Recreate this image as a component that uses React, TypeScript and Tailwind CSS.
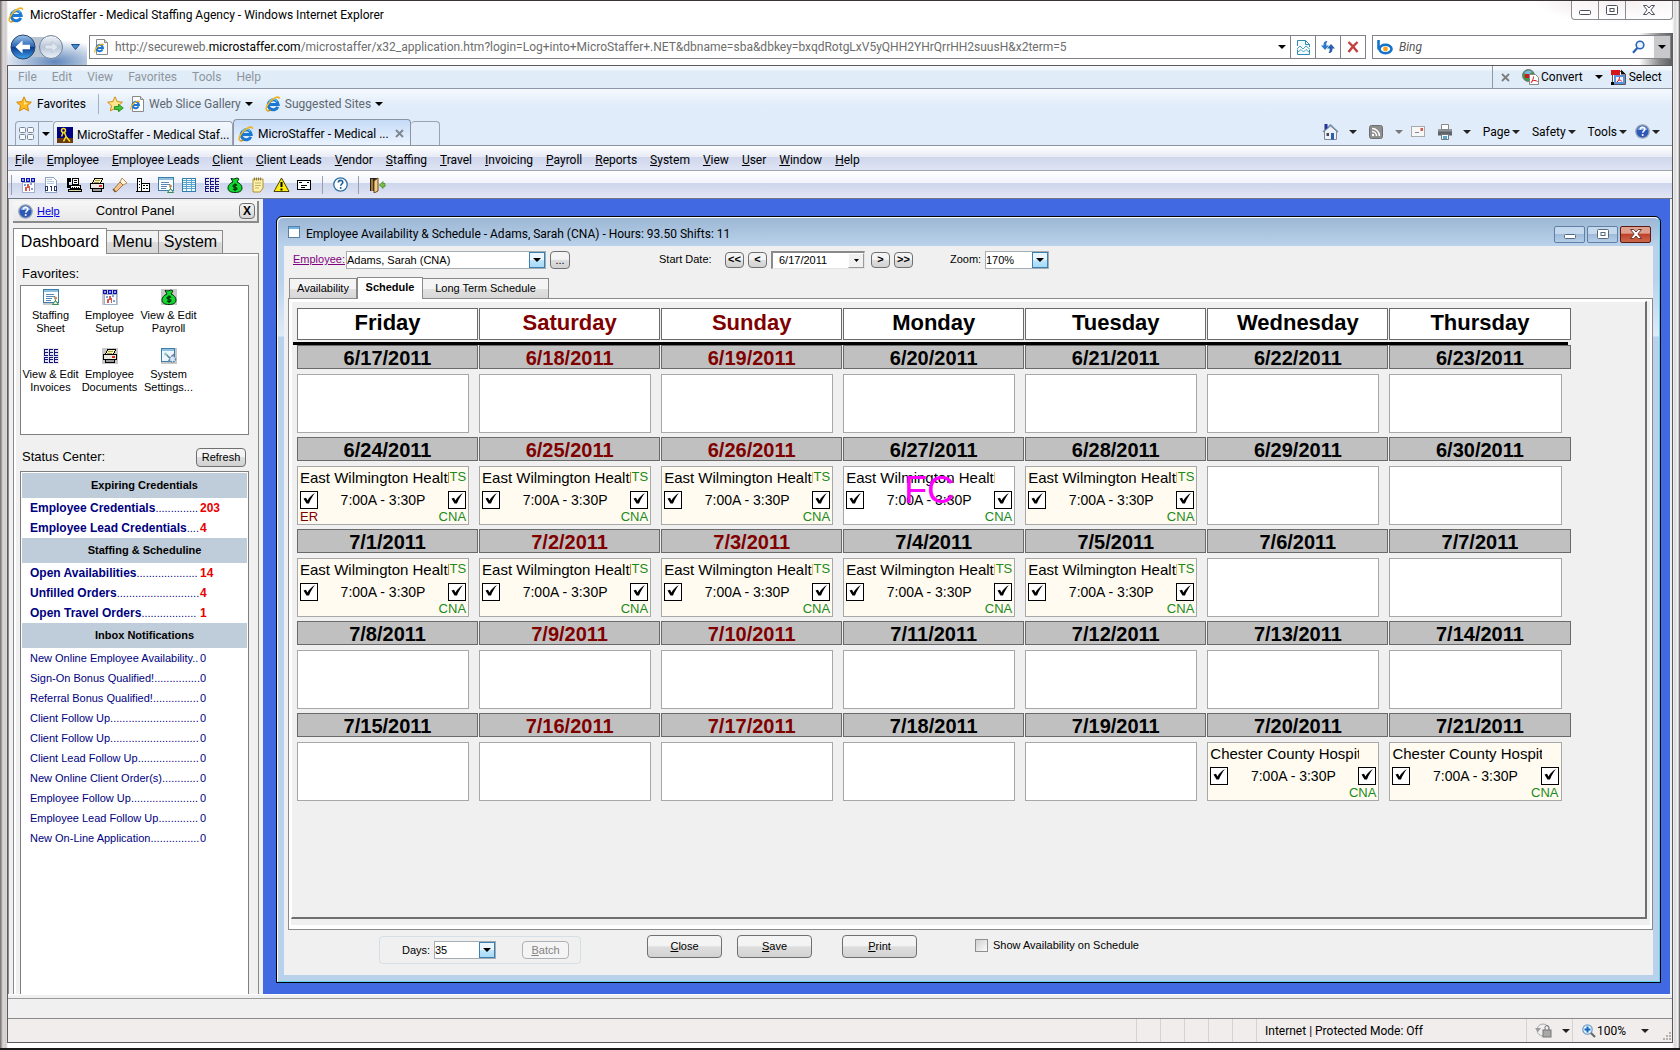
import React from "react";

const crisp = { shapeRendering: "crispEdges" as const };

/* ---------- small drawings ---------- */

function Caret({ className = "text-black" }: { className?: string }) {
  return (
    <svg width="8" height="4" viewBox="0 0 8 4" className={`shrink-0 ${className}`} aria-hidden="true">
      <path d="M0 0h8L4 4z" fill="currentColor" />
    </svg>
  );
}

function IeLogo({ size = 16 }: { size?: number }) {
  return (
    <svg width={size} height={size} viewBox="0 0 16 16" className="shrink-0" aria-hidden="true">
      <path d="M12.8 10.800A5 5 0 1 1 13.200 8.500H4.600" fill="none" stroke="#1b78d2" strokeWidth="3" />
      <path d="M12.400 5.400A5 5 0 0 0 4 5.400" fill="none" stroke="#5cc0f5" strokeWidth="1.300" />
      <path d="M2.200 14.600C-.8 12.800 4 5 9.400 2.200c3-1.600 5-1.400 5.200.6" fill="none" stroke="#f0b323" strokeWidth="1.600" />
      <path d="M2.200 14.600c1 .6 2.600 0 3.600-.6" fill="none" stroke="#c98a10" strokeWidth="1.300" />
    </svg>
  );
}

function PageIe() {
  return (
    <svg width="15" height="16" viewBox="0 0 15 16" className="shrink-0" aria-hidden="true">
      <path d="M2.500.5h8l3 3v12h-11z" fill="#fff" stroke="#8a8a8a" />
      <path d="M10.500.5v3h3" fill="#ddd" stroke="#8a8a8a" />
      <path d="M8.600 10.400A3.200 3.200 0 1 1 8.900 8.900H3.500" fill="none" stroke="#1b74cf" strokeWidth="2" />
      <path d="M1 13.500c-1-1.700 2-6.500 5.500-8 2-.8 3-.3 3 .7" fill="none" stroke="#f0b323" strokeWidth="1.200" />
    </svg>
  );
}

function BackForward() {
  return (
    <svg width="56" height="28" viewBox="0 0 56 28" aria-hidden="true">
      <defs>
        <linearGradient id="back" x1="0" y1="0" x2="0" y2="1">
          <stop offset="0" stopColor="#9cc4ec" />
          <stop offset=".48" stopColor="#2c65b4" />
          <stop offset=".5" stopColor="#0b3788" />
          <stop offset="1" stopColor="#3fa4f0" />
        </linearGradient>
        <linearGradient id="fwd" x1="0" y1="0" x2="0" y2="1">
          <stop offset="0" stopColor="#f3f6fa" />
          <stop offset=".5" stopColor="#b9c7da" />
          <stop offset="1" stopColor="#edf2f8" />
        </linearGradient>
      </defs>
      <rect x="8" y="4" width="36" height="20" fill="#b8c4d2" />
      <circle cx="14" cy="14" r="12" fill="url(#back)" stroke="#2b4468" />
      <path d="M6.500 14l7-6.500v4.200H21v4.600h-7.500v4.200z" fill="#fff" />
      <circle cx="42" cy="14" r="11.500" fill="url(#fwd)" stroke="#74839a" />
      <path d="M49 14l-6-5.500v3.500h-7v4h7v3.500z" fill="#dfe6ee" stroke="#b0bccb" strokeWidth=".6" />
    </svg>
  );
}

function Star({ plus = false }: { plus?: boolean }) {
  return (
    <svg width="17" height="16" viewBox="0 0 17 16" className="shrink-0" aria-hidden="true">
      <path d="M8 .8l2.200 4.800 5.200.6-3.900 3.500 1.100 5.200L8 12.300l-4.600 2.600 1.100-5.200L.6 6.200l5.200-.6z" fill={plus ? "#ffe48a" : "#ffb81f"} stroke="#d48a12" />
      <path d="M8 3l1.200 3.500 2.800.4L8 9z" fill="#ffe999" />
      {plus && <path d="M7.500 10.500h4V8.300l4.800 3.700-4.800 3.700v-2.200h-4z" fill="#3fc43a" stroke="#1d7f1a" strokeWidth=".8" />}
    </svg>
  );
}

function QuickTabs() {
  return (
    <svg width="16" height="14" viewBox="0 0 16 14" aria-hidden="true">
      {[[0.5, 0.5], [8.5, 0.5], [0.5, 7.5], [8.5, 7.5]].map(([x, y]) => (
        <rect key={`${x}-${y}`} x={x} y={y} width="6" height="5" rx="1" fill="#f6f9fd" stroke="#7d8794" />
      ))}
    </svg>
  );
}

function StafferFavicon() {
  return (
    <svg width="16" height="16" viewBox="0 0 16 16" className="shrink-0" aria-hidden="true">
      <path d="M0 0h16v16H0z" fill="#000080" />
      <path d="M0 11h16v5H0z" fill="#6b3a10" />
      <circle cx="6.500" cy="3.500" r="2" fill="none" stroke="#f5e020" strokeWidth="1.500" />
      <path d="M6 6L4.500 9.500M7.500 5.500l1.500 4-2.500 5M9 9.500l4 5" stroke="#f5e020" strokeWidth="1.500" fill="none" />
    </svg>
  );
}

function CompatIcon() {
  return (
    <svg width="13" height="15" viewBox="0 0 13 15" aria-hidden="true">
      <path d="M.5 6V.5h8l4 4V7M.5 9.500v5h12V10" fill="#f4fbff" stroke="#2f8cb5" />
      <path d="M8.500.5v4h4" fill="none" stroke="#2f8cb5" />
      <path d="M0 9l3-3 3 3 3-3 4 3.500M1 12l3-2.500 2.500 2.500L9 9.500l3 2.500" fill="none" stroke="#4aa9c9" />
    </svg>
  );
}

function RefreshIcon() {
  return (
    <svg width="14" height="14" viewBox="0 0 14 14" aria-hidden="true">
      <path d="M6.500 1C3 1 2.500 3 2.500 5.500H0L4 10l4-4.500H5.300C5.300 3.500 5.500 2.500 6.500 1z" fill="#2e7bc8" />
      <path d="M7.500 13c3.500 0 4-2 4-4.500H14L10 4 6 8.500h2.700c0 2-.2 3-1.200 4.500z" fill="#2a5fae" />
    </svg>
  );
}

function StopIcon() {
  return (
    <svg width="12" height="12" viewBox="0 0 12 12" aria-hidden="true">
      <path d="M1.500 1L6 5.500 10.500 1M1.500 11L6 5.500l4.500 5.500" fill="none" stroke="#c3403c" strokeWidth="2.400" />
    </svg>
  );
}

function BingLogo() {
  return (
    <svg width="16" height="15" viewBox="0 0 16 15" className="shrink-0" aria-hidden="true">
      <path d="M1.500 0v9.500" stroke="#1473c8" strokeWidth="2.600" />
      <ellipse cx="8.500" cy="9" rx="6" ry="4.200" fill="#fff" stroke="#1473c8" strokeWidth="2.600" />
      <circle cx="8.500" cy="9" r="2.400" fill="#f6a21b" />
    </svg>
  );
}

function Magnifier() {
  return (
    <svg width="13" height="14" viewBox="0 0 13 14" aria-hidden="true">
      <circle cx="8" cy="5" r="3.800" fill="#e8f3ff" stroke="#2a62b3" strokeWidth="1.600" />
      <path d="M5.300 8L1 12.800" stroke="#2a62b3" strokeWidth="2.200" />
    </svg>
  );
}

function ConvertIcon() {
  return (
    <svg width="17" height="16" viewBox="0 0 17 16" aria-hidden="true">
      <circle cx="6.500" cy="6.500" r="6" fill="#3a9a4a" stroke="#777" />
      <path d="M2 4c3-3 6-3 8-1L6 6z" fill="#7fb6e6" />
      <path d="M3 5h8v4H3z" fill="#d8151b" />
      <path d="M7.500 5.500h6l3 3v7h-9z" fill="#fff" stroke="#888" />
      <path d="M9 14c2-3 2.500-5 2.500-6.500M10 12c2-1 4-.5 5.500.5" stroke="#d8151b" fill="none" />
    </svg>
  );
}

function SelectIcon() {
  return (
    <svg width="16" height="16" viewBox="0 0 16 16" aria-hidden="true">
      <path d="M1.500 2.500h10l3 3v10h-13z" fill="#fff" stroke="#555" />
      <path d="M10 .5l5 5h-5z" fill="#111" />
      <path d="M0 1h9v5H0z" fill="#d8151b" />
      <path d="M4 7h9v7H4z" fill="#eef5ff" stroke="#5c8fdc" strokeWidth="2" />
      <path d="M6 13c2-2 2.500-3 2.500-5M7 11.500c2-1 3 0 4 1" stroke="#d8151b" fill="none" />
      <path d="M0 13h3v3H0z" />
    </svg>
  );
}

function HomeIcon() {
  return (
    <svg width="17" height="16" viewBox="0 0 17 16" aria-hidden="true">
      <path d="M2.500 7v8.500h12V7L8.500 2z" fill="#eef2f8" stroke="#7d8899" />
      <path d="M1 8l7.500-7L16 8" fill="none" stroke="#7b90ac" strokeWidth="1.600" />
      <path d="M2.500 0h3v4l-3 2z" fill="#27339a" />
      <path d="M9 9h3v6.500H9z" fill="#2a5fae" />
      <path d="M4.500 9h2.500v3H4.500z" fill="#445" />
    </svg>
  );
}

function FeedIcon() {
  return (
    <svg width="14" height="14" viewBox="0 0 14 14" aria-hidden="true">
      <rect x=".5" y=".5" width="13" height="13" rx="2" fill="#8e8e8e" stroke="#6f6f6f" />
      <path d="M3 3.500A7.500 7.500 0 0 1 10.500 11M3 6.500A4.500 4.500 0 0 1 7.500 11" fill="none" stroke="#fff" strokeWidth="1.500" />
      <circle cx="4" cy="10" r="1.200" fill="#fff" />
    </svg>
  );
}

function MailIcon() {
  return (
    <svg width="14" height="11" viewBox="0 0 14 11" aria-hidden="true">
      <rect x=".5" y=".5" width="13" height="10" fill="#f7f7f7" stroke="#a9a9a9" />
      <path d="M4 6.500h4" stroke="#888" />
      <path d="M9.500 2h2.500v3H9.500z" fill="#d65a4a" />
    </svg>
  );
}

function PrintIcon() {
  return (
    <svg width="16" height="16" viewBox="0 0 16 16" aria-hidden="true">
      <path d="M4.500.5h7v5h-7z" fill="#fff" stroke="#888" />
      <path d="M1 5.500h14v6H1z" fill="#5f6468" />
      <path d="M1 5.500h14v2H1z" fill="#8f9498" />
      <path d="M4.500 10.500h7v5h-7z" fill="#f2f8ff" stroke="#777" />
      <path d="M6 12h4v3H6z" fill="#56a7c9" />
    </svg>
  );
}

function HelpBall({ dark = true }: { dark?: boolean }) {
  return (
    <svg width="15" height="15" viewBox="0 0 15 15" className="shrink-0" aria-hidden="true">
      <circle cx="7.500" cy="7.500" r="6.700" fill={dark ? "#2d58b8" : "#fdfeff"} stroke={dark ? "#9aa6b8" : "#2f6f9f"} strokeWidth="1.300" />
      {dark && <path d="M2.500 6a5.200 5.200 0 0 1 10 0z" fill="#7fa3e4" />}
      <path d="M5.400 5.600c0-3 4.400-2.800 4.400-.3 0 1.700-2.100 1.700-2.100 3.500" fill="none" stroke={dark ? "#fff" : "#1d5c96"} strokeWidth="1.600" />
      <circle cx="7.700" cy="11" r="1" fill={dark ? "#fff" : "#1d5c96"} />
    </svg>
  );
}

const box16 = "shrink-0";

function CalendarIcon() {
  return (
    <svg width="16" height="16" viewBox="0 0 16 16" className={box16} style={crisp} aria-hidden="true">
      <path d="M2 5h12v10H2z" fill="#fff" stroke="#9fb0cc" />
      <path d="M1 1h4v4H1zM6 1h4v4H6zM11 1h4v4h-4z" fill="#1212b0" />
      <path d="M2 2h2v2H2zM7 2h2v2H7zM12 2h2v2h-2z" fill="#8fa2f0" />
      <path d="M4 7h2v2H4zM10 6h2v2h-2zM11 11h2v2h-2z" fill="#7b9fe0" />
      <path d="M7 7h2v4H7zM5 10h2v4H5zM9 9h1v5H9z" fill="#d6584a" />
    </svg>
  );
}

function BinaryIcon() {
  return (
    <svg width="16" height="16" viewBox="0 0 16 16" className={box16} style={crisp} aria-hidden="true">
      <path d="M2.500.5h8l3 3v12h-11z" fill="#fff" stroke="#8ea3bf" />
      <path d="M4 2.500h5M4 4.500h7M4 6.500h7" stroke="#b8c8dc" />
      <rect x="2.500" y="9.500" width="2" height="4" fill="#fff" stroke="#2b3a66" />
      <path d="M8.500 9v5M7 9.500h1" stroke="#2b3a66" />
      <rect x="11.500" y="9.500" width="2" height="4" fill="#fff" stroke="#2b3a66" />
    </svg>
  );
}

function PhoneIcon() {
  return (
    <svg width="17" height="16" viewBox="0 0 17 16" className={box16} style={crisp} aria-hidden="true">
      <path d="M1 1h4v4H3v3h2v3H1z" />
      <rect x="6.500" y="1.500" width="6" height="6" fill="#fff" stroke="#000" />
      <path d="M8 3.500h3M8 5.500h3" stroke="#000" />
      <path d="M4.500 8.500h10v3h-10z" fill="#fff" stroke="#000" />
      <path d="M6 10.500h7" stroke="#000" strokeDasharray="1 1" />
      <path d="M2.500 12.500h13v2h-13z" fill="#d8d4a8" stroke="#000" />
    </svg>
  );
}

function PrinterIcon() {
  return (
    <svg width="16" height="16" viewBox="0 0 16 16" className={box16} style={crisp} aria-hidden="true">
      <path d="M5.500 1.500h8l-2 5h-8z" fill="#fdf6b0" stroke="#000" />
      <path d="M6 3.500h5M5 5.500h5" stroke="#a09850" />
      <path d="M1.500 6.500h13v5h-13z" fill="#ece9e4" stroke="#000" />
      <path d="M10 8h3v2h-3z" fill="#e0281e" />
      <path d="M3.500 11.500h9v3h-9z" fill="#9a9a9a" stroke="#000" />
    </svg>
  );
}

function FlashlightIcon() {
  return (
    <svg width="16" height="16" viewBox="0 0 16 16" className={box16} aria-hidden="true">
      <path d="M10 1l5 5-4 2-3-3z" fill="#fff7e0" stroke="#b58a53" />
      <path d="M8 5l3 3-7 7-2.500-2.500z" fill="#f1c690" stroke="#a8743a" />
      <path d="M1 12l2.500 3" stroke="#7d5426" strokeWidth="1.500" />
    </svg>
  );
}

function BuildingIcon() {
  return (
    <svg width="16" height="16" viewBox="0 0 16 16" className={box16} style={crisp} aria-hidden="true">
      <rect x="2.500" y="1.500" width="4" height="13" fill="#fff" stroke="#000" />
      <rect x="6.500" y="6.500" width="8" height="8" fill="#fff" stroke="#000" />
      <path d="M4 4.500h1M4 7.500h1M4 10.500h1M8 8.500h2M11 8.500h2M8 11.500h2M11 11.500h2" stroke="#000" />
      <path d="M1 14.500h14" stroke="#000" />
    </svg>
  );
}

function SheetIcon() {
  return (
    <svg width="16" height="16" viewBox="0 0 16 16" className={box16} aria-hidden="true">
      <path d="M.5.5h15v13H.5z" fill="#fff" stroke="#3e7ea6" style={crisp} />
      <path d="M1 1h14v2H1z" fill="#8cc0e0" style={crisp} />
      <path d="M3 5.500h8M3 7.500h9M3 9.500h6M3 11.500h5" stroke="#5a86b8" style={crisp} />
      <circle cx="12.500" cy="9" r="1.500" fill="#c08a50" />
      <path d="M12.500 10.500v2M9.500 15.500l3-4 3 4z" fill="#dff3e0" stroke="#3b8a5a" />
    </svg>
  );
}

function GridIcon({ dark = false }: { dark?: boolean }) {
  return dark ? (
    <svg width="16" height="16" viewBox="0 0 16 16" className={box16} style={crisp} aria-hidden="true">
      <path d="M0 0h16v16H0z" fill="#e6e6f2" />
      {[0, 5, 10].map((x) => (
        <path key={x} d={`M${x + 1} 1h4v1h-3v2h3v1h-3v2h3v1h-4zM${x + 1} 9h4v1h-3v1h3v1h-3v2h3v1h-4z`} fill="#14147a" />
      ))}
    </svg>
  ) : (
    <svg width="16" height="16" viewBox="0 0 16 16" className={box16} style={crisp} aria-hidden="true">
      <rect x="1.500" y="1.500" width="13" height="13" fill="#f4fbff" stroke="#2f7fae" />
      <path d="M2 3.500h12M2 5.500h12M2 7.500h12M2 9.500h12M2 11.500h12M5.500 2v12M10.500 2v12" stroke="#5ba3ca" />
    </svg>
  );
}

function MoneyBag() {
  return (
    <svg width="16" height="16" viewBox="0 0 16 16" className={box16} aria-hidden="true">
      <path d="M4 1.500l3 .5 3-1 2 1-2 3c3 1 5 3.500 5 6 0 3-2.500 4.500-7 4.500S1 14 1 11c0-2.500 2-5 5-6z" fill="#12d92e" stroke="#06300c" />
      <path d="M10 8.500c-1-1.200-4-1-4 .5 0 1.800 4 .8 4 2.500 0 1.500-3 1.500-4 .3M8 6.500v7.500" fill="none" stroke="#03240a" strokeWidth="1.200" />
    </svg>
  );
}

function NotepadIcon() {
  return (
    <svg width="16" height="16" viewBox="0 0 16 16" className={box16} aria-hidden="true">
      <path d="M3 2h10v9l-3 4H3z" fill="#fdf2b0" stroke="#b0902c" />
      <path d="M4.500.5v3M6.500.5v3M8.500.5v3M10.500.5v3" stroke="#8d7c3f" />
      <path d="M5 6h6M5 8.500h6M5 11h4" stroke="#c5ae60" />
    </svg>
  );
}

function WarningIcon() {
  return (
    <svg width="17" height="16" viewBox="0 0 17 16" className={box16} aria-hidden="true">
      <path d="M8.500 1L16 14.500H1z" fill="#ffee10" stroke="#4a4200" strokeLinejoin="round" />
      <path d="M8.500 5v5M8.500 11.500v2" stroke="#000" strokeWidth="2" />
    </svg>
  );
}

function CardIcon() {
  return (
    <svg width="16" height="16" viewBox="0 0 16 16" className={box16} style={crisp} aria-hidden="true">
      <rect x="1.500" y="3.500" width="13" height="9" fill="#fff" stroke="#000" />
      <path d="M3 5.500h3M11 5.500h2M5 8.500h6M5 10.500h4" stroke="#000" />
    </svg>
  );
}

function DoorIcon() {
  return (
    <svg width="17" height="16" viewBox="0 0 17 16" className={box16} aria-hidden="true">
      <path d="M1 1h8v13H1z" fill="#222" />
      <path d="M5 4l4-3v13l-4 2z" fill="#f1ce8c" stroke="#6d4b18" />
      <path d="M2 2h2v12H2z" fill="#a87a3a" />
      <path d="M16 6.500h-2V4.500L10.500 8l3.500 3.500V9.500h2z" fill="#7ac043" stroke="#3a7d12" strokeWidth=".7" />
    </svg>
  );
}

function SettingsIcon() {
  return (
    <svg width="16" height="16" viewBox="0 0 16 16" className={box16} aria-hidden="true">
      <path d="M.5.5h13v13H.5z" fill="#eef7fd" stroke="#3e7ea6" style={crisp} />
      <path d="M1 1h12v2H1z" fill="#8cc3e2" style={crisp} />
      <path d="M5 6l7 8M13 6l-6 8" stroke="#5f86a6" strokeWidth="1.500" />
      <circle cx="11.500" cy="11" r="3" fill="#d7e8f4" stroke="#5f86a6" strokeDasharray="1.500 1" strokeWidth="1.500" />
      <circle cx="4.500" cy="6" r="1.500" fill="#9cc" />
    </svg>
  );
}

function WindowGlyph({ kind, stroke = "#4b4f5c", fill = "#fff" }: { kind: "min" | "max" | "close"; stroke?: string; fill?: string }) {
  return (
    <svg width="14" height="12" viewBox="0 0 14 12" aria-hidden="true">
      {kind === "min" && <rect x="1.500" y="6.500" width="11" height="4" rx="1" fill={fill} stroke={stroke} />}
      {kind === "max" && (
        <>
          <rect x="1.500" y="1.500" width="11" height="9" rx="1" fill={fill} stroke={stroke} />
          <rect x="5" y="4.500" width="4" height="3" fill="none" stroke={stroke} />
        </>
      )}
      {kind === "close" && (
        <path d="M1.500 1.500h3.300L7 4l2.200-2.500h3.300L8.900 6l3.600 4.500H9.200L7 8l-2.200 2.500H1.500L5.100 6z" fill={fill} stroke={stroke} strokeLinejoin="round" />
      )}
    </svg>
  );
}

/* ---------- browser chrome ---------- */

function TitleRow() {
  return (
    <div className="flex h-8 items-start justify-between bg-[radial-gradient(ellipse_90px_22px_at_97%_0,#e9d9dd,transparent)] pl-px">
      <div className="flex items-center gap-1.5 pt-1.5">
        <IeLogo />
        <h1 className="text-xs leading-4 text-black">MicroStaffer - Medical Staffing Agency - Windows Internet Explorer</h1>
      </div>
      <div className="flex h-[19px] divide-x divide-[#8a8a90] rounded-b border border-t-0 border-[#8a8a90] bg-white/60">
        <button aria-label="Minimize" className="flex w-[27px] items-center justify-center"><WindowGlyph kind="min" /></button>
        <button aria-label="Restore" className="flex w-[27px] items-center justify-center"><WindowGlyph kind="max" /></button>
        <button aria-label="Close window" className="flex w-[46px] items-center justify-center"><WindowGlyph kind="close" /></button>
      </div>
    </div>
  );
}

function AddressRow() {
  return (
    <div className="flex h-8 items-start bg-[linear-gradient(90deg,transparent_calc(100%-34px),#8a8a8c_calc(100%-14px),#5c5c5e_100%)]">
      <div className="flex h-full w-20 items-start gap-1.5 bg-[radial-gradient(ellipse_60px_22px_at_60%_90%,#5f86bb,transparent)] pl-0.5">
        <button aria-label="Back and forward"><BackForward /></button>
        <button aria-label="Recent pages" className="mt-[11px]">
          <svg width="9" height="6" viewBox="0 0 9 6" aria-hidden="true"><path d="M.5.5h8L4.500 5.500z" fill="#3f8fd0" stroke="#1f4f8a" /></svg>
        </button>
      </div>
      <div className="mt-0.5 ml-0.5 flex h-6 flex-1 border border-[#7f8288] bg-white/80">
        <div className="flex min-w-0 flex-1 items-center gap-1.5 px-1">
          <PageIe />
          <div className="min-w-0 flex-1 truncate text-xs text-[#6d6d6d]">
            http://secureweb.<span className="text-black">microstaffer.com</span>/microstaffer/x32_application.htm?login=Log+into+MicroStaffer+.NET&amp;dbname=sba&amp;dbkey=bxqdRotgLxV5yQHH2YHrQrrHH2suusH&amp;x2term=5
          </div>
          <Caret />
        </div>
        <button aria-label="Compatibility view" className="flex w-[25px] items-center justify-center border-l border-[#7f8288]"><CompatIcon /></button>
        <button aria-label="Refresh page" className="flex w-[25px] items-center justify-center border-l border-[#7f8288]"><RefreshIcon /></button>
        <button aria-label="Stop" className="flex w-[25px] items-center justify-center border-l border-[#7f8288]"><StopIcon /></button>
      </div>
      <div className="mt-0.5 ml-1.5 mr-0.5 flex h-6 w-[299px] items-center gap-1.5 border border-[#7f8288] bg-white/95 pl-1">
        <BingLogo />
        <input aria-label="Search Bing" placeholder="Bing" className="min-w-0 flex-1 bg-transparent text-xs italic outline-none placeholder:text-[#555]" />
        <button aria-label="Search" className="w-4"><Magnifier /></button>
        <button aria-label="Search options" className="flex h-full w-4 items-center justify-center bg-[#c9c9cb]"><Caret /></button>
      </div>
    </div>
  );
}

function BrowserMenu() {
  return (
    <div className="flex h-[23px] items-stretch border-b border-[#8c98a8] bg-[linear-gradient(#f6f9fd_0,#f1f6fc_4px,#e0ecf8_5px,#e0ecf8_100%)]">
      <nav className="flex flex-1 items-center gap-[15px] pl-2.5 text-xs text-[#8f959c]">
        {["File", "Edit", "View", "Favorites", "Tools", "Help"].map((m) => (
          <button key={m}>{m}</button>
        ))}
      </nav>
      <div className="flex w-[180px] items-center border-l border-[#8c98a8] pl-2 text-xs">
        <button aria-label="Close toolbar" className="mr-3 text-[#7d7d7d]">
          <svg width="9" height="9" viewBox="0 0 9 9" aria-hidden="true"><path d="M1 1l7 7M8 1L1 8" stroke="currentColor" strokeWidth="1.800" /></svg>
        </button>
        <button className="flex items-center gap-0.5"><ConvertIcon />Convert</button>
        <span className="ml-3 mr-2 flex"><Caret /></span>
        <button className="flex items-center gap-0.5"><SelectIcon />Select</button>
      </div>
    </div>
  );
}

function FavoritesBar() {
  return (
    <div className="flex h-[31px] items-center pl-2 pb-0.5 text-xs">
      <button className="flex items-center gap-1"><Star />Favorites</button>
      <span className="ml-3 mr-2 h-5 w-px bg-[#a5b1c0]" />
      <button aria-label="Add to favorites bar" className="mr-1.5"><Star plus /></button>
      <button className="flex items-center gap-1 text-[#5f6770]"><PageIe />Web Slice Gallery<Caret /></button>
      <button className="ml-3 flex items-center gap-1 text-[#5f6770]"><IeLogo />Suggested Sites<Caret /></button>
    </div>
  );
}

function BrowserTabs() {
  return (
    <div className="flex h-[26px] items-end border-b border-[#8a94a2] pl-[7px] text-xs">
      <button aria-label="Quick tabs" className="flex h-6 w-6 items-center justify-center rounded-tl border border-b-0 border-[#9aa4b1]"><QuickTabs /></button>
      <button aria-label="Tab list" className="flex h-6 w-[14px] items-center justify-center border-t border-[#9aa4b1]"><Caret /></button>
      <div role="tablist" className="flex items-end">
        <button role="tab" aria-selected="false" className="flex h-6 w-[180px] items-center gap-1 rounded-t border border-b-0 border-[#9aa4b1] bg-[linear-gradient(#f4f8fd,#dfe9f5)] pl-[3px] pt-0.5 whitespace-nowrap">
          <StafferFavicon />MicroStaffer - Medical Staf...
        </button>
        <div role="tab" aria-selected="true" className="flex h-[26px] w-[178px] items-center gap-1 rounded-t border border-b-0 border-[#8a94a2] bg-[linear-gradient(#c6dbf7,#eaf3fe)] pl-1 pr-1.5 pt-0.5 whitespace-nowrap">
          <IeLogo />
          <span className="flex-1">MicroStaffer - Medical ...</span>
          <button aria-label="Close tab" className="text-[#7d8590]">
            <svg width="9" height="9" viewBox="0 0 9 9" aria-hidden="true"><path d="M1 1l7 7M8 1L1 8" stroke="currentColor" strokeWidth="1.800" /></svg>
          </button>
        </div>
        <button aria-label="New tab" className="h-6 w-[29px] rounded-t border border-b-0 border-l-0 border-[#9aa4b1]" />
      </div>
      <div className="flex h-full flex-1 items-center justify-end pr-3 pb-0.5">
        <button aria-label="Home"><HomeIcon /></button>
        <span className="ml-2.5"><Caret className="text-[#222]" /></span>
        <button aria-label="Feeds" className="ml-3"><FeedIcon /></button>
        <span className="ml-3"><Caret className="text-[#777]" /></span>
        <button aria-label="Read mail" className="ml-2"><MailIcon /></button>
        <button aria-label="Print page" className="ml-3"><PrintIcon /></button>
        <span className="ml-2.5"><Caret className="text-[#222]" /></span>
        {["Page", "Safety", "Tools"].map((t) => (
          <button key={t} className="ml-3 flex items-center gap-0.5">{t}<Caret className="text-[#222]" /></button>
        ))}
        <button aria-label="Browser help" className="ml-2 flex items-center gap-0.5"><HelpBall /><Caret className="text-[#222]" /></button>
      </div>
    </div>
  );
}

/* ---------- application bars ---------- */

const appMenu = ["File", "Employee", "Employee Leads", "Client", "Client Leads", "Vendor", "Staffing", "Travel", "Invoicing", "Payroll", "Reports", "System", "View", "User", "Window", "Help"];

function AppMenu() {
  return (
    <nav className="flex h-[25px] items-center gap-[13px] border-b border-[#a0a4ae] bg-[linear-gradient(#fff_0,#e9ecf6_44%,#d0d7ec_46%,#dfe4f4_100%)] pl-[7px] pt-1 text-xs">
      {appMenu.map((m) => (
        <button key={m}><u>{m[0]}</u>{m.slice(1)}</button>
      ))}
    </nav>
  );
}

const tools: [string, React.ReactNode][] = [
  ["Employee setup", <CalendarIcon />],
  ["Data", <BinaryIcon />],
  ["Call log", <PhoneIcon />],
  ["Print", <PrinterIcon />],
  ["Find", <FlashlightIcon />],
  ["Facilities", <BuildingIcon />],
  ["Staffing sheet", <SheetIcon />],
  ["Schedule grid", <GridIcon />],
  ["Invoices", <GridIcon dark />],
  ["Payroll", <MoneyBag />],
  ["Notes", <NotepadIcon />],
  ["Alerts", <WarningIcon />],
  ["Mail", <CardIcon />],
];

function AppToolbar() {
  return (
    <div className="flex h-7 items-center border-b border-[#6f7585] bg-[linear-gradient(#fff_0,#f1f3fb_44%,#cdd6ed_46%,#e2e6f5_100%)] pl-[3px]">
      <span className="mr-2 h-5 w-px bg-[#9a9ea8]" />
      <div className="flex items-center gap-[7px]">
        {tools.map(([name, icon]) => (
          <button key={name} aria-label={name} className="w-4">{icon}</button>
        ))}
      </div>
      <span className="mx-2.5 h-[18px] w-px bg-[#9a9ea8]" />
      <button aria-label="Help topics"><HelpBall dark={false} /></button>
      <span className="mx-2.5 h-[18px] w-px bg-[#9a9ea8]" />
      <button aria-label="Exit"><DoorIcon /></button>
    </div>
  );
}

/* ---------- side panel ---------- */

const favorites: [string, string, React.ReactNode][] = [
  ["Staffing", "Sheet", <SheetIcon />],
  ["Employee", "Setup", <CalendarIcon />],
  ["View & Edit", "Payroll", <MoneyBag />],
  ["View & Edit", "Invoices", <GridIcon dark />],
  ["Employee", "Documents", <PrinterIcon />],
  ["System", "Settings...", <SettingsIcon />],
];

/* Each row: label, length of its dotted leader, count. */
const status: { title: string; strong: boolean; rows: [string, number, number][] }[] = [
  { title: "Expiring Credentials", strong: true, rows: [["Employee Credentials", 14, 203], ["Employee Lead Credentials", 4, 4]] },
  { title: "Staffing & Scheduline", strong: true, rows: [["Open Availabilities", 20, 14], ["Unfilled Orders", 27, 4], ["Open Travel Orders", 18, 1]] },
  {
    title: "Inbox Notifications",
    strong: false,
    rows: [
      ["New Online Employee Availability", 2, 0],
      ["Sign-On Bonus Qualified!", 15, 0],
      ["Referral Bonus Qualified!", 15, 0],
      ["Client Follow Up", 29, 0],
      ["Client Follow Up", 29, 0],
      ["Client Lead Follow Up", 20, 0],
      ["New Online Client Order(s)", 12, 0],
      ["Employee Follow Up", 22, 0],
      ["Employee Lead Follow Up", 13, 0],
      ["New On-Line Application", 16, 0],
    ],
  },
];

function SidePanel() {
  return (
    <aside className="flex w-[255px] flex-col border-l border-[#8b8b8b] bg-[#f0f0f0] pl-1 pr-1 font-['Liberation_Sans',sans-serif] text-black">
      <div className="mt-0.5 flex h-[22px] items-center border-b-2 border-r-2 border-[#8a8a8a] bg-[linear-gradient(#f7f7f7,#e8e8e8)] pl-[5px] pr-0.5">
        <HelpBall />
        <a href="#help" className="ml-1 text-[11px] text-[#0000e0] underline">Help</a>
        <h2 className="ml-9 flex-1 text-[13px] leading-4">Control Panel</h2>
        <button aria-label="Close panel" className="flex h-4 w-4 items-center justify-center rounded-sm border border-[#707070] bg-[linear-gradient(#f4f4f4,#d4d4d4)] text-xs font-bold">X</button>
      </div>
      <div role="tablist" className="mt-[5px] flex items-end text-base leading-5">
        <button role="tab" aria-selected="true" className="z-10 -mb-px h-[26px] w-[94px] border border-b-0 border-[#8a8a8a] bg-white">Dashboard</button>
        <button role="tab" aria-selected="false" className="h-[23px] w-[52px] border border-b-0 border-l-0 border-[#8a8a8a] bg-[linear-gradient(#f2f2f2_50%,#dcdcdc_52%,#d6d6d6)]">Menu</button>
        <button role="tab" aria-selected="false" className="h-[23px] w-16 border border-b-0 border-l-0 border-[#8a8a8a] bg-[linear-gradient(#f2f2f2_50%,#dcdcdc_52%,#d6d6d6)]">System</button>
      </div>
      <div className="flex flex-1 flex-col border border-b-0 border-[#8a8a8a] bg-white pt-0.5 pl-0.5">
        <div className="flex flex-1 flex-col bg-[#f0f0f0] pl-1 pr-[9px] pt-2">
          <h3 className="pl-0.5 text-[13px] leading-5">Favorites:</h3>
          <div className="mt-px grid h-[150px] grid-cols-[59px_59px_59px] content-start border border-[#7f7f7f] bg-white">
            {favorites.map(([a, b, icon]) => (
              <button key={a + b} className="flex h-[59px] flex-col items-center pt-[3px] text-[11px] leading-[13px] whitespace-nowrap">
                <span className="mb-1 bg-[#c8c8c8]">{icon}</span>
                <span>{a}</span>
                <span>{b}</span>
              </button>
            ))}
          </div>
          <div className="mt-3 flex h-5 items-center justify-between pl-0.5 pr-[3px]">
            <h3 className="text-[13px] leading-5">Status Center:</h3>
            <button className="h-[19px] w-[50px] rounded-sm border border-[#707070] bg-[linear-gradient(#f4f4f4_45%,#dedede_50%,#d0d0d0)] text-[11px] leading-4">Refresh</button>
          </div>
          <div className="mt-1 flex-1 border border-b-0 border-[#7f7f7f] bg-white px-px pt-px">
            {status.map((s) => (
              <section key={s.title}>
                <h4 className="bg-[#bfccd9] pl-5 text-center text-[11px] leading-[25px] font-bold">{s.title}</h4>
                {s.rows.map(([label, dots, n], i) => (
                  <a key={i} href="#status" className={s.strong ? "flex h-5 items-center pl-2 text-xs font-bold text-[#000080]" : "flex h-5 items-center pl-2 text-[11px] text-[#000080]"}>
                    <span className="w-[170px] whitespace-nowrap">
                      {label}<span className="text-[11px] font-normal">{".".repeat(dots)}</span>
                    </span>
                    <span className={s.strong ? "text-[#e80000]" : ""}>{n}</span>
                  </a>
                ))}
              </section>
            ))}
          </div>
        </div>
      </div>
    </aside>
  );
}

/* ---------- schedule window ---------- */

const arrowBtn = "flex w-4 items-center justify-center border border-[#3c7fb1] bg-[linear-gradient(#eaf6fd_50%,#bee6fd_52%,#a7d9f5)]";

function Combo({ id, value, className }: { id: string; value: string; className: string }) {
  return (
    <div className={`flex h-[18px] border border-[#a5acb2] bg-white ${className}`}>
      <select id={id} defaultValue={value} className="min-w-0 flex-1 appearance-none bg-white text-[11px] leading-4 outline-none">
        <option>{value}</option>
      </select>
      <span aria-hidden="true" className={arrowBtn}><Caret /></span>
    </div>
  );
}

const pushBtn = "rounded-sm border border-[#707070] bg-[linear-gradient(#f4f4f4_45%,#dedede_52%,#d2d2d2)]";

function Controls() {
  return (
    <div className="flex h-[31px] items-center pl-[9px] pb-1 text-[11px]">
      <label htmlFor="employee" className="w-[53px] text-[#800080] underline">Employee:</label>
      <Combo id="employee" value="Adams, Sarah (CNA)" className="w-[200px]" />
      <button aria-label="Browse employees" className={`ml-1 h-[18px] w-5 leading-3 ${pushBtn}`}>...</button>
      <label htmlFor="start" className="ml-[89px] w-[66px]">Start Date:</label>
      <div className="flex items-center gap-1">
        <button aria-label="Back one period" className={`h-4 w-[19px] ${pushBtn} flex items-center justify-center font-bold`}>&lt;&lt;</button>
        <button aria-label="Back one day" className={`h-4 w-[19px] ${pushBtn} flex items-center justify-center font-bold`}>&lt;</button>
        <div className="flex h-[18px] w-[94px] border border-t-2 border-l-2 border-[#8a8a8a] border-r-[#e4e4e4] border-b-[#e4e4e4] bg-white">
          <input id="start" defaultValue="6/17/2011" className="min-w-0 flex-1 bg-transparent pl-1.5 text-[11px] outline-none" />
          <span aria-hidden="true" className="flex w-4 items-center justify-center border border-[#9a9a9a] border-t-white border-l-white bg-[#f0f0f0]">
            <svg width="5" height="3" viewBox="0 0 5 3"><path d="M0 0h5L2.500 3z" /></svg>
          </span>
        </div>
        <button aria-label="Forward one day" className={`ml-0.5 h-4 w-[19px] ${pushBtn} flex items-center justify-center font-bold`}>&gt;</button>
        <button aria-label="Forward one period" className={`h-4 w-[19px] ${pushBtn} flex items-center justify-center font-bold`}>&gt;&gt;</button>
      </div>
      <label htmlFor="zoom" className="ml-[37px] w-[35px]">Zoom:</label>
      <Combo id="zoom" value="170%" className="w-16" />
    </div>
  );
}

const days = ["Friday", "Saturday", "Sunday", "Monday", "Tuesday", "Wednesday", "Thursday"];

type Shift = { client: string; er?: boolean; ts?: boolean; fc?: boolean };
const ew: Shift = { client: "East Wilmington Health", ts: true };
const cc: Shift = { client: "Chester County Hospit" };

const weeks: { dates: string[]; shifts: (Shift | null)[] }[] = [
  { dates: ["6/17/2011", "6/18/2011", "6/19/2011", "6/20/2011", "6/21/2011", "6/22/2011", "6/23/2011"], shifts: [null, null, null, null, null, null, null] },
  {
    dates: ["6/24/2011", "6/25/2011", "6/26/2011", "6/27/2011", "6/28/2011", "6/29/2011", "6/30/2011"],
    shifts: [{ ...ew, er: true }, ew, ew, { client: ew.client, fc: true }, ew, null, null],
  },
  { dates: ["7/1/2011", "7/2/2011", "7/3/2011", "7/4/2011", "7/5/2011", "7/6/2011", "7/7/2011"], shifts: [ew, ew, ew, ew, ew, null, null] },
  { dates: ["7/8/2011", "7/9/2011", "7/10/2011", "7/11/2011", "7/12/2011", "7/13/2011", "7/14/2011"], shifts: [null, null, null, null, null, null, null] },
  { dates: ["7/15/2011", "7/16/2011", "7/17/2011", "7/18/2011", "7/19/2011", "7/20/2011", "7/21/2011"], shifts: [null, null, null, null, null, cc, cc] },
];

function ShiftCheck({ label }: { label: string }) {
  return (
    <label className="relative flex h-[18px] w-[18px]">
      <input type="checkbox" defaultChecked aria-label={label} className="h-full w-full appearance-none border border-black bg-white" />
      <svg viewBox="0 0 18 18" className="pointer-events-none absolute inset-0 h-full w-full" aria-hidden="true">
        <path d="M3.500 7.500l2.500-.7L7.500 9.500C9 6.500 11.500 4 15 2c-2.500 3-4.500 6.500-6 10.500H6.500z" fill="#000" />
      </svg>
    </label>
  );
}

function ShiftCard({ shift }: { shift: Shift | null }) {
  if (!shift) return <div className="mt-[5px] mb-1 mr-2.5 h-[59px] border border-[#a8a8a8] bg-white" />;
  return (
    <div className={`relative mt-[5px] mb-1 mr-2.5 h-[59px] border border-[#a8a8a8] px-0.5 ${shift.fc ? "bg-white" : "bg-[#fffbf0]"}`}>
      <div className="flex h-6">
        <span className="min-w-0 flex-1 overflow-hidden text-[15px] leading-[21px] whitespace-nowrap">{shift.client}</span>
        <span className="w-[17px] text-right text-[13px] leading-[19px] text-[#1b8a1b]">{shift.ts ? "TS" : ""}</span>
      </div>
      <div className="flex items-center justify-between text-sm leading-[18px]">
        <ShiftCheck label="Shift start confirmed" />
        <span>7:00A - 3:30P</span>
        <ShiftCheck label="Shift end confirmed" />
      </div>
      <div className="flex justify-between text-[13px] leading-[15px]">
        <span className="text-[#800000]">{shift.er ? "ER" : ""}</span>
        <span className="text-[#1b8a1b]">CNA</span>
      </div>
      {shift.fc && <span className="absolute inset-x-0 top-0 text-center text-[38px] leading-[47px] text-[#f0f]">FC</span>}
    </div>
  );
}

function Calendar() {
  return (
    <table className="ml-[5px] w-[94.2%] table-fixed border-separate border-spacing-0">
      <thead>
        <tr>
          {days.map((d, i) => (
            <th key={d} scope="col" className="p-0">
              <div className={`mr-px mb-0.5 h-8 border border-[#6a6a6a] bg-white text-[22px] leading-7 font-bold ${i === 1 || i === 2 ? "text-[#800000]" : "text-black"}`}>{d}</div>
            </th>
          ))}
        </tr>
        <tr>
          <td colSpan={7} className="p-0"><div className="-ml-1 mr-1 h-[3px] bg-black" /></td>
        </tr>
      </thead>
      <tbody>
        {weeks.map((w) => (
          <React.Fragment key={w.dates[0]}>
            <tr>
              {w.dates.map((d, i) => (
                <th key={d} scope="col" className="p-0">
                  <div className={`mr-px h-6 border border-[#6a6a6a] bg-[#c0c0c0] text-[20px] leading-6 font-bold ${i === 1 || i === 2 ? "text-[#800000]" : "text-black"}`}>{d}</div>
                </th>
              ))}
            </tr>
            <tr>
              {w.shifts.map((s, i) => (
                <td key={i} className="p-0"><ShiftCard shift={s} /></td>
              ))}
            </tr>
          </React.Fragment>
        ))}
      </tbody>
    </table>
  );
}

const winBtn = "flex h-[17px] w-[31px] items-center justify-center rounded-xs border border-[#5f7fa3] bg-[linear-gradient(#c5d9ee_45%,#9fbbd9_50%,#b5cfea)]";

function ScheduleWindow() {
  return (
    <section className="flex flex-1 flex-col rounded-t-md border border-black bg-[linear-gradient(#9bb6d4_0,#b9d1ea_28px,#b9d1ea_60px,#dfeaf7_119px,#b9d1ea_120px)]">
      <div className="flex flex-1 flex-col rounded-t-md border-t border-l border-r border-b border-t-white border-l-white border-r-[#5fd3ee] border-b-[#5fd3ee] px-1.5 pb-1.5">
        <div className="flex h-7 items-center pl-1 pr-0.5 font-['Roboto',sans-serif] text-xs">
          <svg width="12" height="12" viewBox="0 0 12 12" className="mr-1.5" aria-hidden="true">
            <rect x=".5" y=".5" width="11" height="11" fill="#fff" stroke="#5b7fa3" />
            <path d="M1 1h10v2H1z" fill="#6fb4e6" />
          </svg>
          <h2 className="flex-1 pt-1">Employee Availability &amp; Schedule - Adams, Sarah (CNA) - Hours: 93.50 Shifts: 11</h2>
          <div className="flex gap-0.5 pt-1">
            <button aria-label="Minimize schedule" className={winBtn}><WindowGlyph kind="min" stroke="#54697f" /></button>
            <button aria-label="Restore schedule" className={winBtn}><WindowGlyph kind="max" stroke="#54697f" /></button>
            <button aria-label="Close schedule" className="flex h-[17px] w-[31px] items-center justify-center rounded-xs border border-[#5a1a14] bg-[linear-gradient(#e0a090_40%,#c2412c_50%,#cc6a4c)]"><WindowGlyph kind="close" stroke="#6a3a36" /></button>
          </div>
        </div>
        <div className="flex flex-1 flex-col bg-[#f0f0f0] font-['Liberation_Sans',sans-serif] text-[11px] text-black">
          <Controls />
          <div role="tablist" className="z-10 -mb-px flex h-[22px] items-end pl-[5px]">
            <button role="tab" aria-selected="false" className="mb-px h-5 w-[68px] border border-b-0 border-[#8a8a8a] bg-[linear-gradient(#f4f4f4_50%,#e0e0e0_52%,#d8d8d8)]">Availability</button>
            <button role="tab" aria-selected="true" className="h-[22px] w-[66px] border-x border-t border-[#8a8a8a] bg-white pb-0.5 text-[11px] font-bold">Schedule</button>
            <button role="tab" aria-selected="false" className="mb-px h-5 w-[126px] border border-b-0 border-l-0 border-[#8a8a8a] bg-[linear-gradient(#f4f4f4_50%,#e0e0e0_52%,#d8d8d8)]">Long Term Schedule</button>
          </div>
          <div className="ml-1 flex flex-1 flex-col border border-[#8a8a8a] bg-white px-0.5 pt-0.5 pb-1">
            <div className="flex flex-1 flex-col bg-[#f0f0f0] pr-[3px] pb-1.5">
              <div className="flex-1 border-t border-l border-r-2 border-b-2 border-t-white border-l-white border-r-[#6f6f6f] border-b-[#6f6f6f] pt-1.5">
                <Calendar />
              </div>
            </div>
          </div>
          <div className="flex h-[45px] items-start pl-[95px] pt-[3px]">
            <div className="mt-[3px] flex h-7 w-[202px] items-center rounded border border-[#d5dfe5] pl-[22px]">
              <label htmlFor="days" className="w-8">Days:</label>
              <Combo id="days" value="35" className="w-[62px]" />
              <button disabled className="ml-[26px] h-[18px] w-[47px] rounded-sm border border-[#adb2b5] bg-[#f4f4f4] leading-3 text-[#838383]"><u>B</u>atch</button>
            </div>
            <button className={`ml-[66px] mt-0.5 h-[23px] w-[75px] ${pushBtn}`}><u>C</u>lose</button>
            <button className={`ml-[15px] mt-0.5 h-[23px] w-[75px] ${pushBtn}`}><u>S</u>ave</button>
            <button className={`ml-[30px] mt-0.5 h-[23px] w-[75px] ${pushBtn}`}><u>P</u>rint</button>
            <label className="ml-[58px] mt-1 flex items-center gap-[5px]">
              <input type="checkbox" className="h-[13px] w-[13px] appearance-none border border-[#8e8f8f] bg-[linear-gradient(135deg,#d0d0d0,#fbfbfb)]" />
              Show Availability on Schedule
            </label>
          </div>
        </div>
      </div>
    </section>
  );
}

/* ---------- status bar ---------- */

function StatusBar() {
  return (
    <footer className="flex h-6 items-center border-t border-[#8a8a8a] bg-[#f1edec] text-xs">
      <div className="flex h-full flex-1 justify-end">
        {[0, 1, 2, 3, 4].map((i) => (
          <span key={i} className="w-6 border-l border-[#d6d2d0]" />
        ))}
      </div>
      <span className="flex h-full w-[270px] items-center border-l border-[#d6d2d0] pl-2">Internet | Protected Mode: Off</span>
      <button aria-label="Privacy report" className="flex h-full w-[46px] items-center gap-2.5 border-l border-[#d6d2d0] pl-2">
        <svg width="17" height="15" viewBox="0 0 17 15" aria-hidden="true">
          <circle cx="8" cy="7" r="6" fill="#efefef" stroke="#a9a9a9" />
          <path d="M0 5l3 4 3-4z" fill="#9a9a9a" />
          <rect x="8" y="7" width="8" height="7" fill="#a8a8a8" stroke="#777" />
          <path d="M10 7V4.500a2 2 0 0 1 4 0V7" fill="none" stroke="#777" />
        </svg>
        <Caret className="text-[#222]" />
      </button>
      <button className="flex h-full w-[100px] items-center border-l border-[#d6d2d0] pl-[9px]">
        <svg width="14" height="14" viewBox="0 0 14 14" aria-hidden="true">
          <circle cx="5.500" cy="5.500" r="4.700" fill="#e7f4ff" stroke="#6f9cc6" strokeWidth="1.200" />
          <path d="M5.500 2.500v6M2.500 5.500h6" stroke="#1566c0" strokeWidth="2" />
          <path d="M9 9l4 4" stroke="#666" strokeWidth="2.200" />
        </svg>
        <span className="ml-px w-11 text-left">100%</span>
        <Caret className="text-[#222]" />
        <svg width="9" height="9" viewBox="0 0 9 9" className="ml-auto mr-px mt-3" aria-hidden="true">
          <path d="M7 0h2v2H7zM4 3h2v2H4zM7 3h2v2H7zM1 6h2v2H1zM4 6h2v2H4zM7 6h2v2H7z" fill="#b5b0ae" />
        </svg>
      </button>
    </footer>
  );
}

export default function App() {
  return (
    <div className="flex min-h-screen flex-col border-t border-b-2 border-[#3a3436] border-b-[#1a1a1a] bg-[linear-gradient(90deg,#6f6868_0,#dcd8d7_3px,#cfcbca_6px,#ffffff_8px,#ffffff_calc(100%-8px),#d9d9d9_calc(100%-5px),#f4f4f4_calc(100%-2px),#4a4446_100%)] px-[7px] pb-[5px] font-['Roboto',sans-serif] text-black">
      <TitleRow />
      <AddressRow />
      <div className="flex flex-1 flex-col border border-[#5a5a5e] bg-[#f0f0f0]">
        <div className="bg-[linear-gradient(#f5f9fe_23px,#e0ecf9_40px,#e0ecf9_100%)]">
          <BrowserMenu />
          <FavoritesBar />
          <BrowserTabs />
        </div>
        <AppMenu />
        <AppToolbar />
        <main className="flex flex-1 border-b border-white">
          <SidePanel />
          <div className="mr-0.5 flex flex-1 bg-[#4169e1] pt-[17px] pr-[9px] pb-[11px] pl-[13px]">
            <ScheduleWindow />
          </div>
        </main>
        <div className="mt-[3px] h-5 border-t border-[#9a9a9a]" />
        <StatusBar />
      </div>
    </div>
  );
}
